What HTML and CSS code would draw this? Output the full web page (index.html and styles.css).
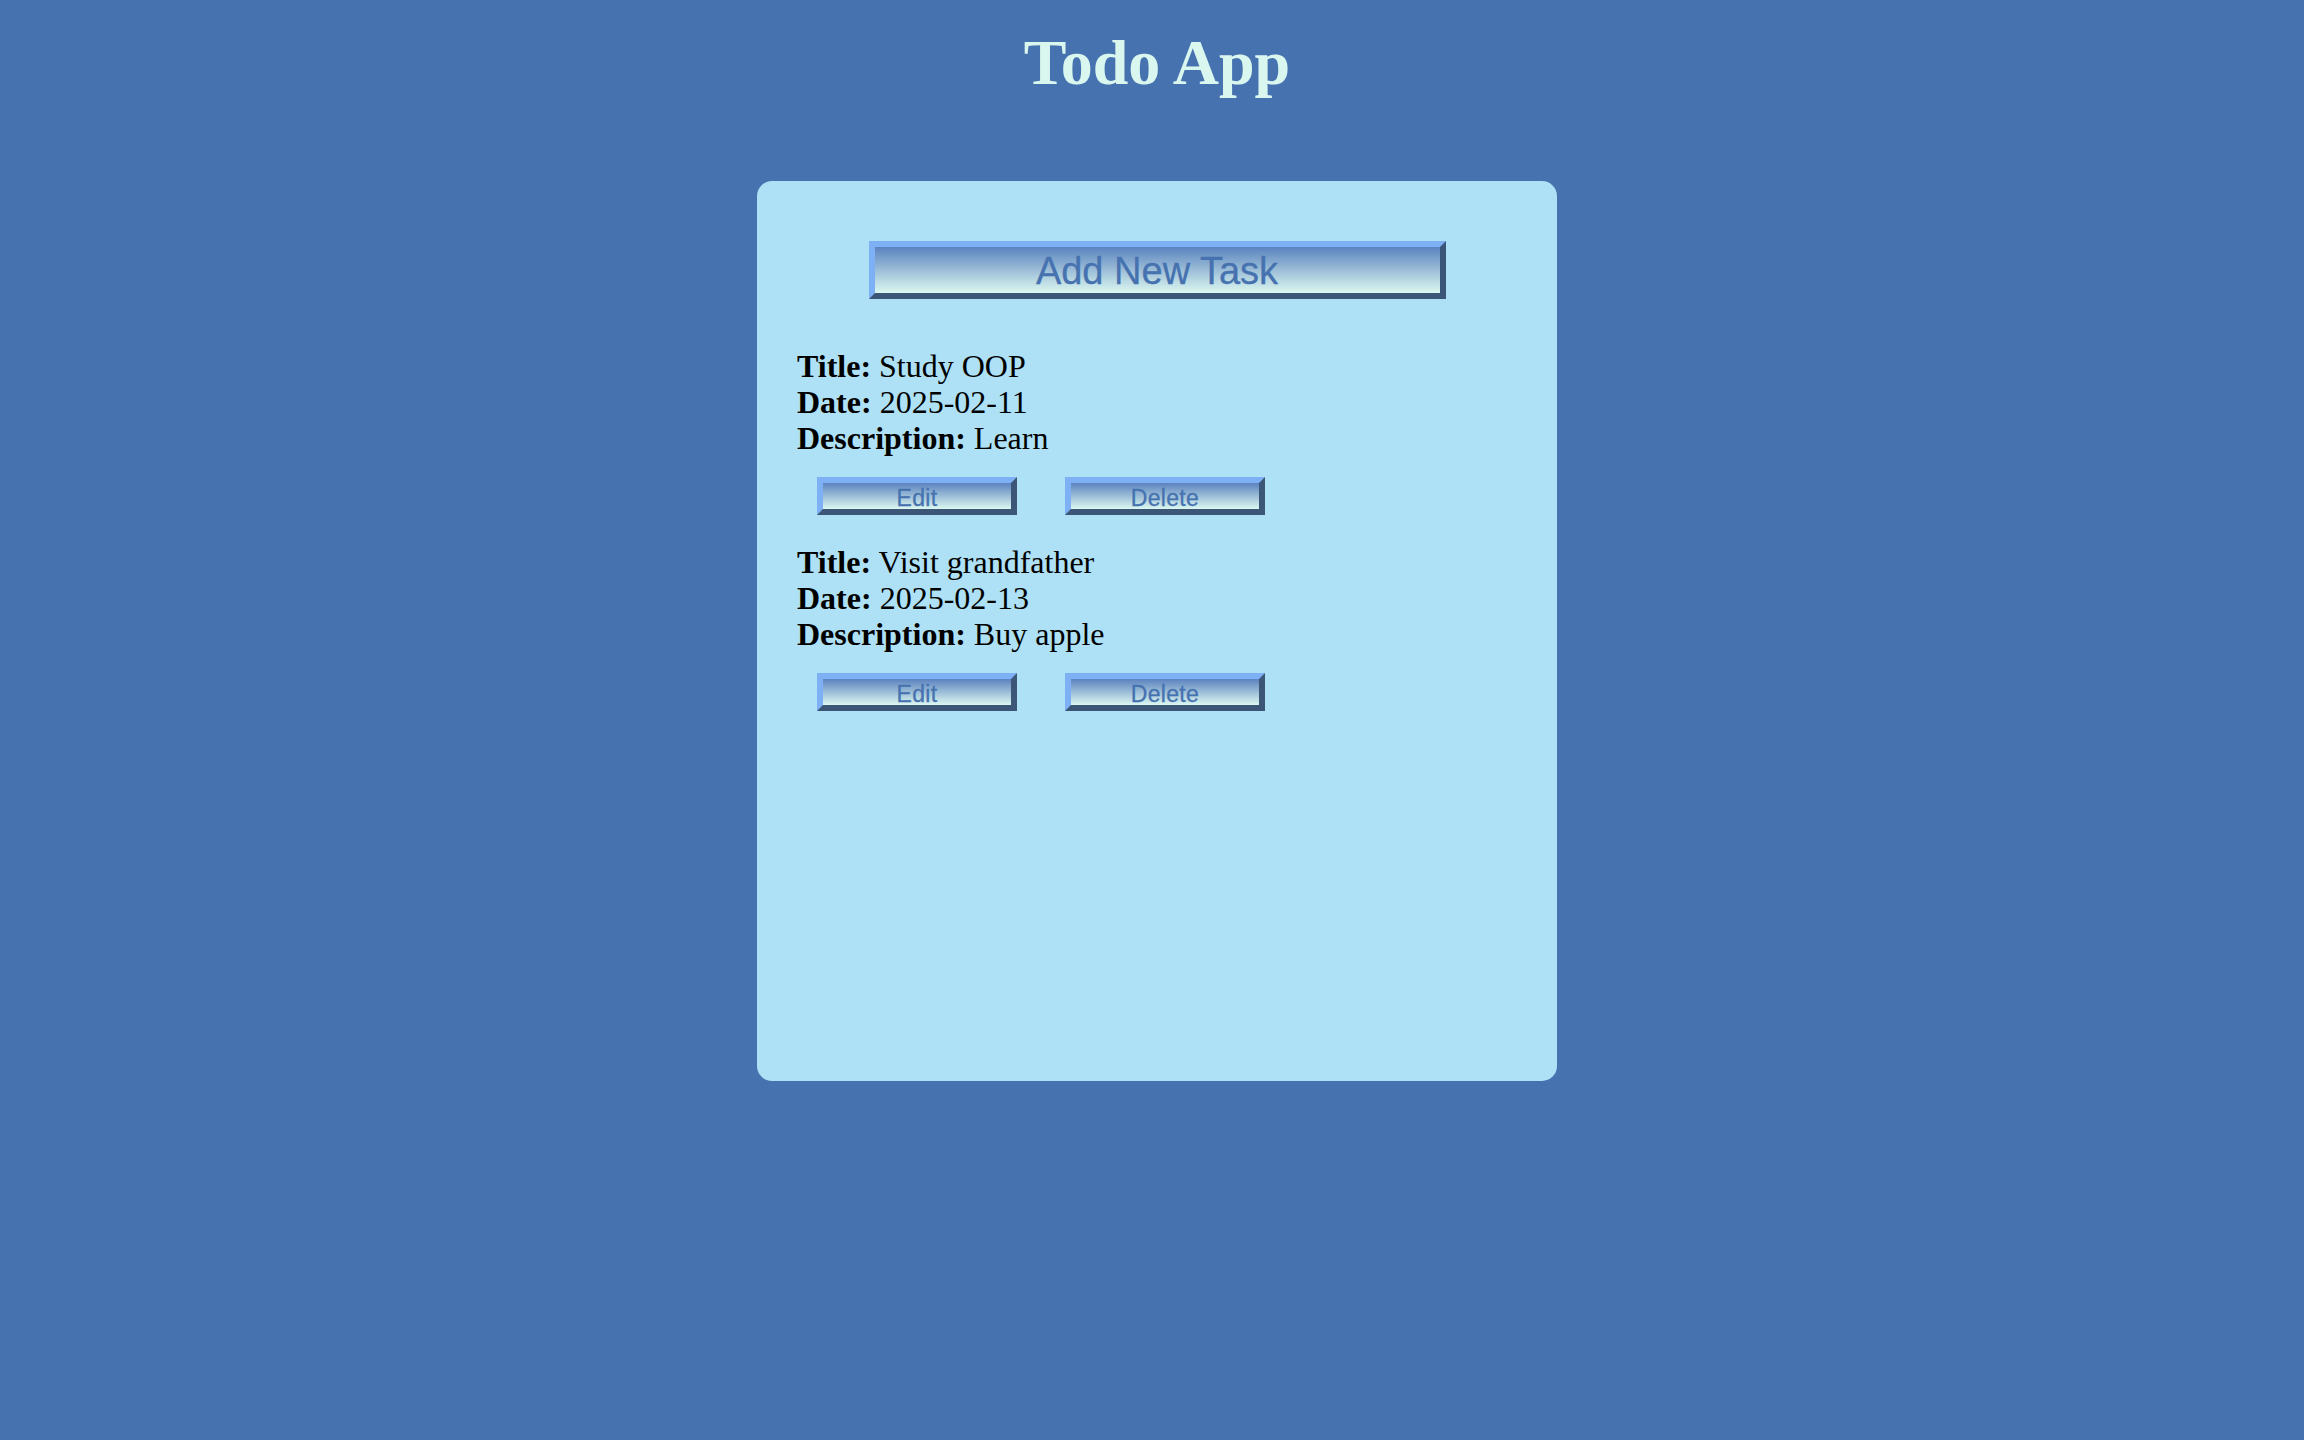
FILE: index.html
```html
<!DOCTYPE html>
<html lang="en">
<head>
<meta charset="utf-8">
<title>Todo App</title>
<link rel="stylesheet" href="styles.css">
</head>
<body>
<h1 class="app-title">Todo App</h1>
<main class="card">
  <button class="btn btn-add" type="button">Add New Task</button>
  <ul class="tasks">
    <li class="task">
      <div class="task-line"><b>Title:</b> Study OOP</div>
      <div class="task-line"><b>Date:</b> 2025-02-11</div>
      <div class="task-line"><b>Description:</b> Learn</div>
      <div class="task-actions">
        <button class="btn btn-small" type="button">Edit</button>
        <button class="btn btn-small" type="button">Delete</button>
      </div>
    </li>
    <li class="task">
      <div class="task-line"><b>Title:</b> Visit grandfather</div>
      <div class="task-line"><b>Date:</b> 2025-02-13</div>
      <div class="task-line"><b>Description:</b> Buy apple</div>
      <div class="task-actions">
        <button class="btn btn-small" type="button">Edit</button>
        <button class="btn btn-small" type="button">Delete</button>
      </div>
    </li>
  </ul>
</main>
</body>
</html>
```

FILE: styles.css
```css
html, body {
  margin: 0;
  padding: 0;
}
body {
  background: #4672b0;
  font-family: "Liberation Serif", "Times New Roman", serif;
  padding-left: 10px;
  min-height: 1440px;
  box-sizing: border-box;
}
.app-title {
  margin: 26px 0 81px;
  font-size: 64px;
  line-height: 74px;
  font-weight: bold;
  text-align: center;
  color: #daf7ef;
}
.card {
  width: 800px;
  height: 900px;
  box-sizing: border-box;
  margin: 0 auto;
  padding: 60px 40px 40px;
  background: #aee1f5;
  border-radius: 15px;
}
.btn {
  box-sizing: border-box;
  border-style: solid;
  border-width: 6px;
  border-color: #7eb0f6 #3c5677 #3c5677 #7eb0f6;
  background: linear-gradient(to bottom, #5b83bf, #dcf8f0);
  color: #4672b0;
  font-family: "Liberation Sans", Arial, Helvetica, sans-serif;
  padding: 0;
  margin: 0;
  text-align: center;
  cursor: pointer;
  -webkit-text-stroke: 0.3px #4672b0;
}
.btn-add {
  display: block;
  width: 577px;
  height: 58px;
  margin: 0 auto;
  font-size: 38px;
  line-height: 46px;
  padding-top: 1px;
}
.tasks {
  list-style: none;
  margin: 49px 0 0;
  padding: 0;
}
.task {
  margin: 0 0 29px;
  font-size: 32px;
  line-height: 36px;
  color: #000;
}
.task-actions {
  display: flex;
  gap: 48px;
  margin: 21px 0 0 20px;
}
.btn-small {
  width: 200px;
  height: 38px;
  font-size: 23px;
  line-height: 26px;
  padding-top: 2px;
  letter-spacing: 0.3px;
}
```
